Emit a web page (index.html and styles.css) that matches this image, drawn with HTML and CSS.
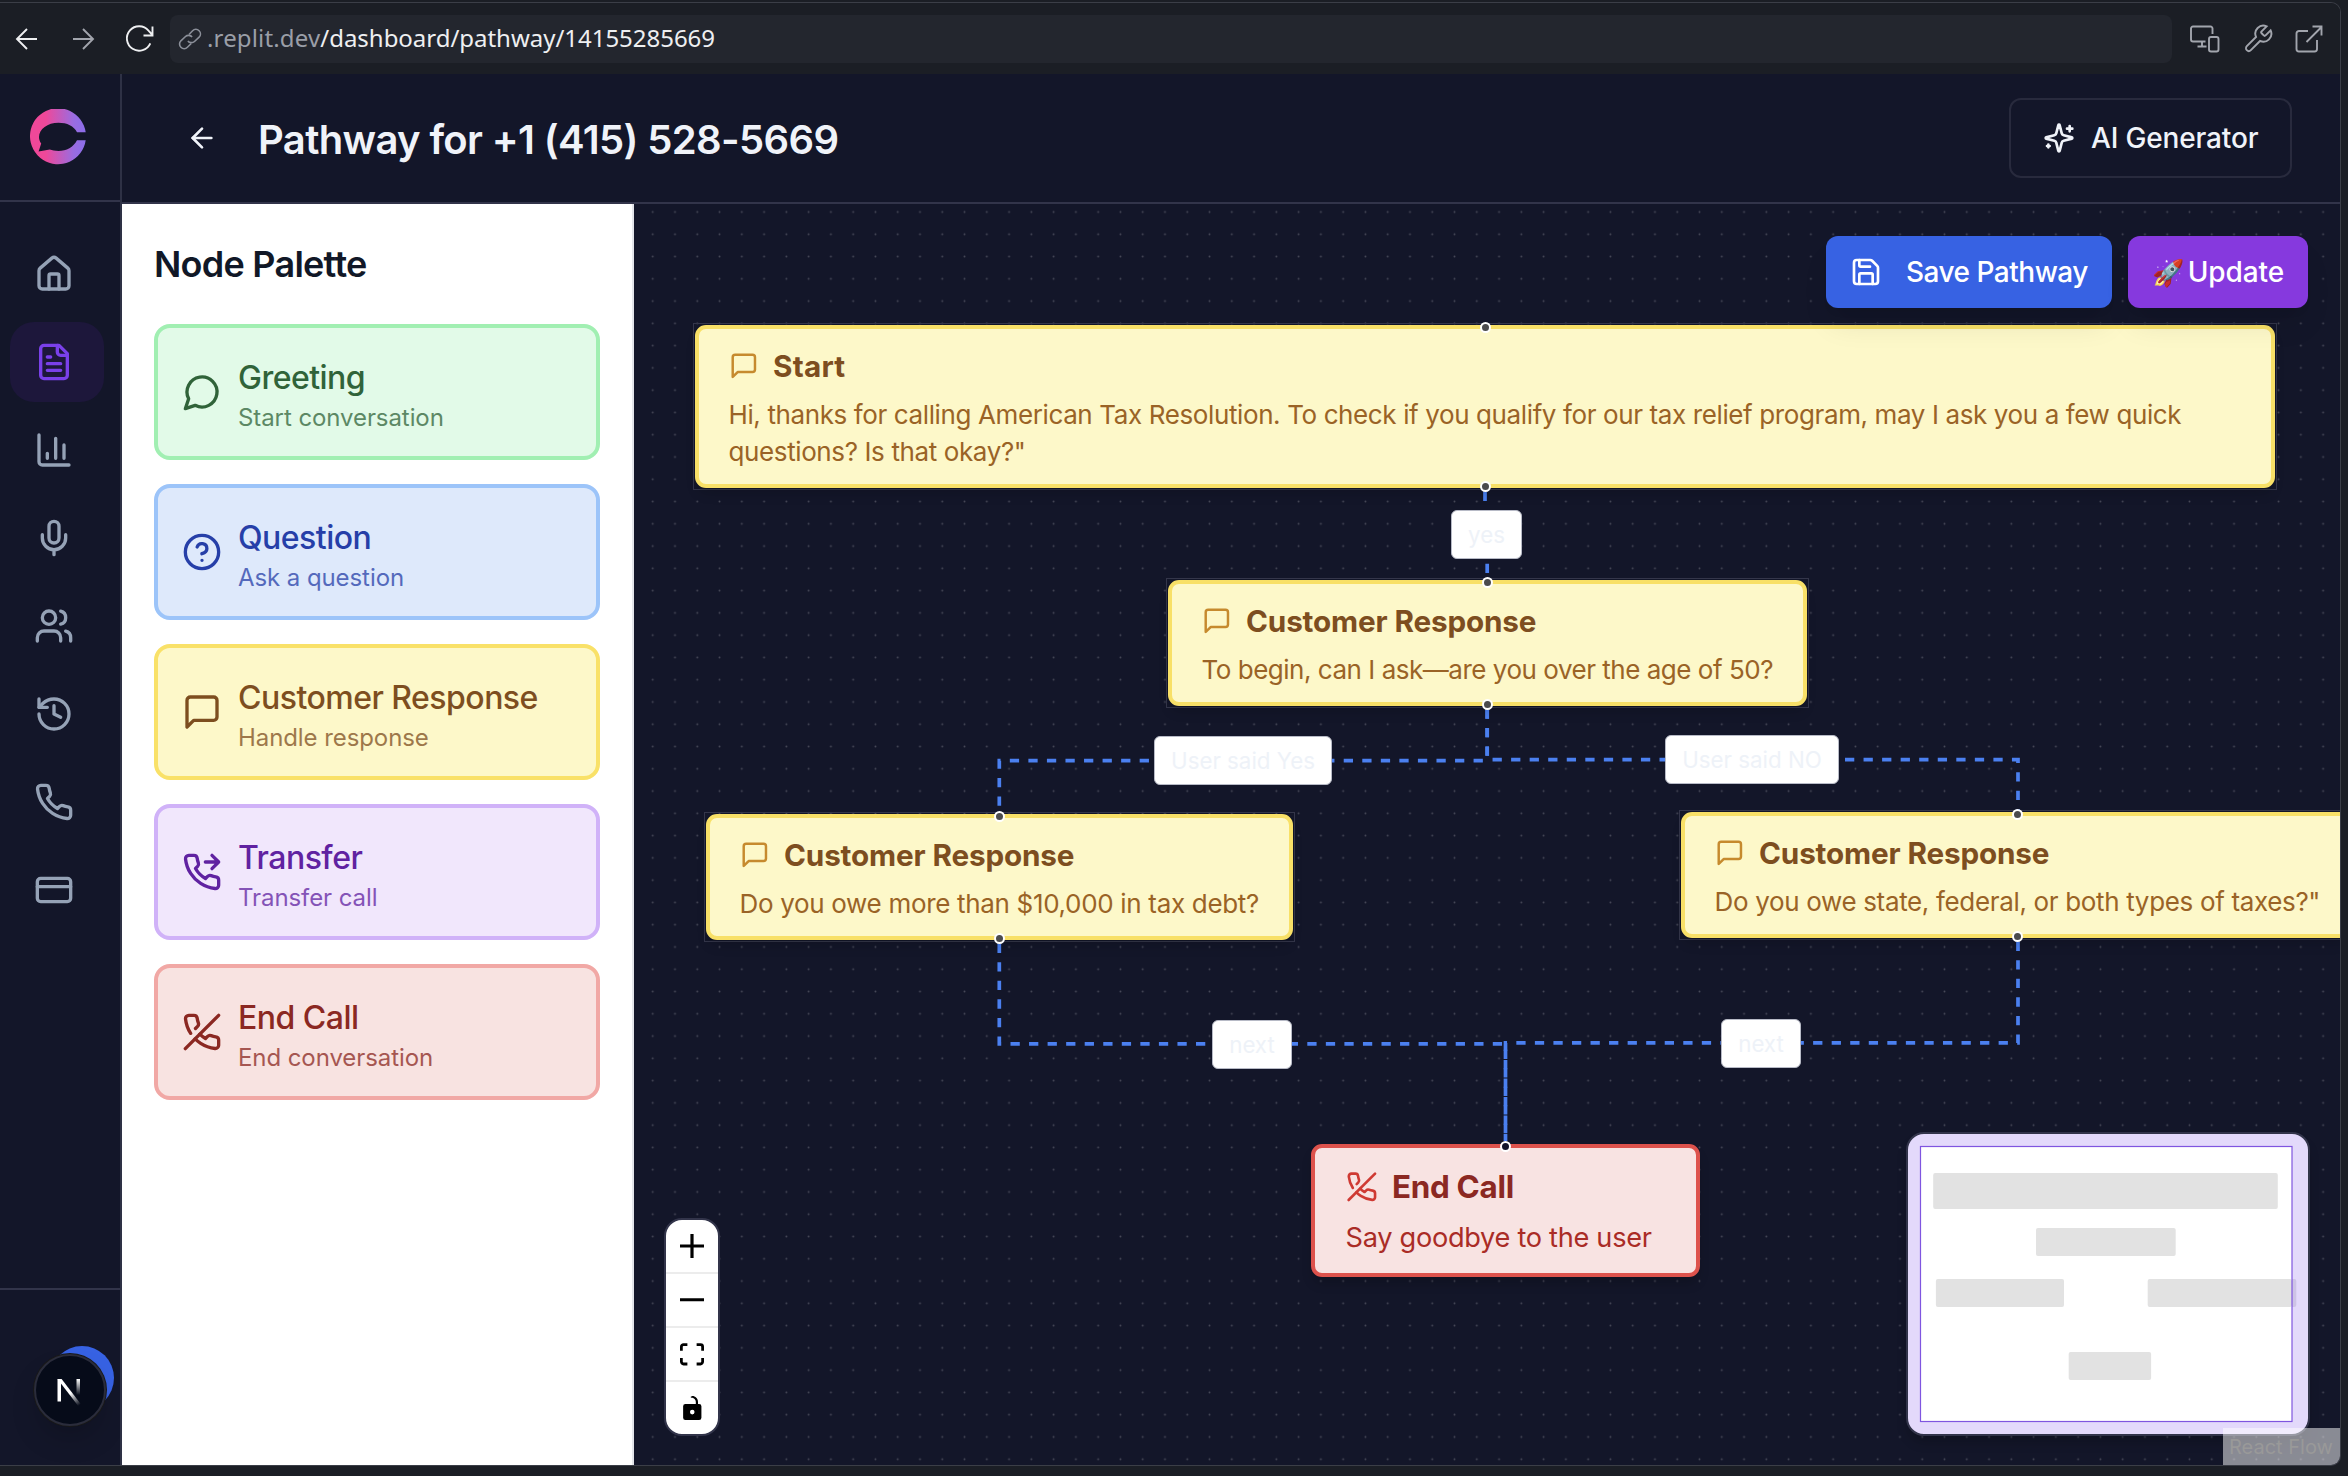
FILE: index.html
```html
<!DOCTYPE html>
<html lang="en">
<head>
<meta charset="utf-8">
<title>Pathway for +1 (415) 528-5669</title>
<link rel="stylesheet" href="styles.css">
</head>
<body>
<svg class="defs" width="0" height="0" aria-hidden="true">
  <symbol id="i-message" viewBox="0 0 24 24"><path d="M21 15a2 2 0 0 1-2 2H7l-4 4V5a2 2 0 0 1 2-2h14a2 2 0 0 1 2 2z"/></symbol>
  <symbol id="i-phone-off" viewBox="0 0 24 24"><path d="M10.68 13.31a16 16 0 0 0 3.41 2.6l1.27-1.27a2 2 0 0 1 2.11-.45 12.84 12.84 0 0 0 2.81.7 2 2 0 0 1 1.72 2v3a2 2 0 0 1-2.18 2 19.79 19.79 0 0 1-8.63-3.07 19.42 19.42 0 0 1-3.33-2.67m-2.67-3.34a19.79 19.79 0 0 1-3.07-8.63A2 2 0 0 1 4.11 2h3a2 2 0 0 1 2 1.72 12.84 12.84 0 0 0 .7 2.81 2 2 0 0 1-.45 2.11L8.09 9.91"/><path d="M22 2 2 22"/></symbol>
  <symbol id="i-arrow-left" viewBox="0 0 24 24"><path d="m12 19-7-7 7-7"/><path d="M19 12H5"/></symbol>
</svg>
<div class="preview">
  <div class="browser-bar">
    <div class="nav-buttons">
      <svg class="bar-icon" width="24" height="24" viewBox="0 0 24 24"><path d="M12 2 2 12l10 10M2.300 12H22"/></svg>
      <svg class="bar-icon muted" width="24" height="24" viewBox="0 0 24 24"><path d="m12 2 10 10-10 10M21.700 12H2"/></svg>
      <svg class="bar-icon" width="32" height="32" viewBox="0 0 32 32"><path d="M27.300 20.300A12.200 12.200 0 1 1 25.500 7.700L29.500 12M29.500 3.500V12.500H20.500"/></svg>
    </div>
    <div class="url-field">
      <svg class="link-icon" width="24" height="24" viewBox="0 0 24 24"><path d="m11 7.500 3.600-3.800a4.500 4.500 0 0 1 6.500 6.500l-4.600 4.300a4.500 4.500 0 0 1-6.600-.6"/><path d="m13.200 16.500-3.800 3.800a4.500 4.500 0 0 1-6.500-6.500l4.600-4.300a4.500 4.500 0 0 1 6.600.6"/></svg>
      <span class="url-host">.replit.dev</span><span class="url-path">/dashboard/pathway/14155285669</span>
    </div>
    <div class="bar-tools">
      <svg width="30" height="28" viewBox="0 0 30 28"><path d="M22.500 9V3.500A2 2 0 0 0 20.500 1.500H3A2 2 0 0 0 1 3.500V14.500A2 2 0 0 0 3 16.500H15.500M12 16.500V21M7.500 21.500H16.500"/><rect x="19" y="12" width="9.500" height="14.500" rx="2"/></svg>
      <svg width="32" height="32" viewBox="0 0 24 24" class="thin"><path d="M14.700 6.300a1 1 0 0 0 0 1.400l1.600 1.600a1 1 0 0 0 1.400 0l3.770-3.770a6 6 0 0 1-7.940 7.940l-6.910 6.910a2.120 2.120 0 0 1-3-3l6.910-6.910a6 6 0 0 1 7.940-7.940l-3.760 3.760z"/></svg>
      <svg width="28" height="28" viewBox="0 0 28 28"><path d="M13 6H4A2.500 2.500 0 0 0 1.500 8.500V24A2.500 2.500 0 0 0 4 26.500H19.500A2.500 2.500 0 0 0 22 24V15M11.500 17 26.500 2M17.500 1.500H26.500V10.500"/></svg>
    </div>
  </div>

  <div class="app">
    <aside class="sidebar">
      <div class="brand">
        <svg width="56" height="56" viewBox="0 0 56 56">
          <defs><linearGradient id="brand-fill" x1="0" x2="1" y1="0" y2="0"><stop offset=".28" stop-color="#ef4899"/><stop offset=".78" stop-color="#9a6ce0"/><stop offset="1" stop-color="#8b6eea"/></linearGradient></defs>
          <path fill="url(#brand-fill)" d="M55.700 23.200A28 28 0 1 0 55.700 31.200H47C43.500 38 36.500 42 28.500 42C25 42 22 41.300 19.800 40.600L8.600 42.600L11.200 34.600C9.700 32.500 9 30.200 9 28C9 20 17.500 13.700 28.500 13.700C37 13.700 44 17 47 23.200Z"/>
        </svg>
      </div>
      <nav class="side-nav">
        <a class="side-item"><svg class="icon" viewBox="0 0 24 24"><path d="M15 21v-8a1 1 0 0 0-1-1h-4a1 1 0 0 0-1 1v8"/><path d="M3 10a2 2 0 0 1 .709-1.528l7-5.999a2 2 0 0 1 2.582 0l7 5.999A2 2 0 0 1 21 10v9a2 2 0 0 1-2 2H5a2 2 0 0 1-2-2z"/></svg></a>
        <a class="side-item active"><svg class="icon" viewBox="0 0 24 24"><path d="M15 2H6a2 2 0 0 0-2 2v16a2 2 0 0 0 2 2h12a2 2 0 0 0 2-2V7Z"/><path d="M14 2v4a2 2 0 0 0 2 2h4M10 9H8M16 13H8M16 17H8"/></svg></a>
        <a class="side-item"><svg class="icon" viewBox="0 0 24 24"><path d="M3 3v16a2 2 0 0 0 2 2h16M18 17V9M13 17V5M8 17v-3"/></svg></a>
        <a class="side-item"><svg class="icon" viewBox="0 0 24 24"><path d="M12 2a3 3 0 0 0-3 3v7a3 3 0 0 0 6 0V5a3 3 0 0 0-3-3Z"/><path d="M19 10v2a7 7 0 0 1-14 0v-2M12 19v3"/></svg></a>
        <a class="side-item"><svg class="icon" viewBox="0 0 24 24"><path d="M16 21v-2a4 4 0 0 0-4-4H6a4 4 0 0 0-4 4v2"/><circle cx="9" cy="7" r="4"/><path d="M22 21v-2a4 4 0 0 0-3-3.870M16 3.130a4 4 0 0 1 0 7.750"/></svg></a>
        <a class="side-item"><svg class="icon" viewBox="0 0 24 24"><path d="M3 12a9 9 0 1 0 9-9 9.750 9.750 0 0 0-6.740 2.740L3 8"/><path d="M3 3v5h5M12 7v5l4 2"/></svg></a>
        <a class="side-item"><svg class="icon" viewBox="0 0 24 24"><path d="M22 16.920v3a2 2 0 0 1-2.180 2 19.790 19.790 0 0 1-8.630-3.070 19.500 19.500 0 0 1-6-6 19.790 19.790 0 0 1-3.070-8.670A2 2 0 0 1 4.110 2h3a2 2 0 0 1 2 1.720 12.840 12.840 0 0 0 .7 2.810 2 2 0 0 1-.45 2.110L8.090 9.910a16 16 0 0 0 6 6l1.270-1.270a2 2 0 0 1 2.110-.45 12.840 12.840 0 0 0 2.810.7A2 2 0 0 1 22 16.920z"/></svg></a>
        <a class="side-item"><svg class="icon" viewBox="0 0 24 24"><rect x="2" y="5" width="20" height="14" rx="2"/><path d="M2 10h20"/></svg></a>
      </nav>
      <div class="account">
        <span class="avatar"></span>
        <span class="dev-badge">
          <svg width="32" height="32" viewBox="0 0 32 32">
            <defs>
              <linearGradient id="n-diag" gradientUnits="userSpaceOnUse" x1="18" y1="18" x2="27" y2="30"><stop stop-color="#fff"/><stop offset="1" stop-color="#fff" stop-opacity="0"/></linearGradient>
              <linearGradient id="n-stem" gradientUnits="userSpaceOnUse" x1="24" y1="5" x2="24" y2="21"><stop stop-color="#fff"/><stop offset="1" stop-color="#fff" stop-opacity="0"/></linearGradient>
            </defs>
            <path fill="#fff" d="M3.500 5H7V27.500H3.500Z"/>
            <path fill="url(#n-diag)" d="M3.500 5H7.600L27.500 31L25 33Z"/>
            <path fill="url(#n-stem)" d="M22.500 5H26V21H22.500Z"/>
          </svg>
        </span>
      </div>
    </aside>

    <main class="main">
      <header class="page-header">
        <button class="back"><svg class="icon small"><use href="#i-arrow-left"/></svg></button>
        <h1 class="page-title">Pathway for +1 (415) 528-5669</h1>
        <button class="ai-button">
          <svg class="icon small" viewBox="0 0 24 24"><path d="M9.937 15.500A2 2 0 0 0 8.500 14.063l-6.135-1.582a.5.5 0 0 1 0-.962L8.500 9.936A2 2 0 0 0 9.937 8.500l1.582-6.135a.5.5 0 0 1 .963 0L14.063 8.500A2 2 0 0 0 15.500 9.937l6.135 1.581a.5.5 0 0 1 0 .964L15.500 14.063a2 2 0 0 0-1.437 1.437l-1.582 6.135a.5.5 0 0 1-.963 0z"/><path d="M20 3v4M22 5h-4M4 17v2M5 18H3"/></svg>
          AI Generator
        </button>
      </header>

      <div class="workspace">
        <section class="palette">
          <h2 class="palette-title">Node Palette</h2>
          <div class="palette-card green">
            <svg class="icon" viewBox="0 0 24 24"><path d="M7.900 20A9 9 0 1 0 4 16.100L2 22Z"/></svg>
            <div class="card-text"><div class="card-name">Greeting</div><div class="card-hint">Start conversation</div></div>
          </div>
          <div class="palette-card blue">
            <svg class="icon" viewBox="0 0 24 24"><circle cx="12" cy="12" r="10"/><path d="M9.090 9a3 3 0 0 1 5.830 1c0 2-3 3-3 3M12 17h.01"/></svg>
            <div class="card-text"><div class="card-name">Question</div><div class="card-hint">Ask a question</div></div>
          </div>
          <div class="palette-card yellow">
            <svg class="icon"><use href="#i-message"/></svg>
            <div class="card-text"><div class="card-name">Customer Response</div><div class="card-hint">Handle response</div></div>
          </div>
          <div class="palette-card purple">
            <svg class="icon" viewBox="0 0 24 24"><path d="m18 2 4 4-4 4M14 6h8"/><path d="M22 16.920v3a2 2 0 0 1-2.180 2 19.790 19.790 0 0 1-8.630-3.070 19.500 19.500 0 0 1-6-6 19.790 19.790 0 0 1-3.070-8.670A2 2 0 0 1 4.110 2h3a2 2 0 0 1 2 1.720 12.840 12.840 0 0 0 .7 2.810 2 2 0 0 1-.45 2.110L8.090 9.910a16 16 0 0 0 6 6l1.270-1.270a2 2 0 0 1 2.110-.45 12.840 12.840 0 0 0 2.810.7A2 2 0 0 1 22 16.920z"/></svg>
            <div class="card-text"><div class="card-name">Transfer</div><div class="card-hint">Transfer call</div></div>
          </div>
          <div class="palette-card red">
            <svg class="icon"><use href="#i-phone-off"/></svg>
            <div class="card-text"><div class="card-name">End Call</div><div class="card-hint">End conversation</div></div>
          </div>
        </section>

        <section class="canvas">
          <svg class="edges" width="1706" height="1261" viewBox="634 204 1706 1261">
            <defs><pattern id="dots" patternUnits="userSpaceOnUse" x="641.600" y="200.860" width="22.272" height="22.272"><circle cx="11.136" cy="11.136" r=".93" fill="#91919a" fill-opacity=".42"/></pattern></defs>
            <rect x="634" y="204" width="1706" height="1261" fill="url(#dots)"/>
            <g class="edge">
              <path d="M1485 491.700V534H1487.200V578"/>
              <path d="M1487.200 709.400V760.700H999.300V812"/>
              <path d="M1487.200 709.400V759.700H2018V810"/>
              <path d="M999.300 943.700V1043.800H1505.500V1141"/>
              <path d="M2018 941.700V1042.900H1505.500V1141"/>
            </g>
          </svg>

          <span class="edge-label l-yes">yes</span>
          <span class="edge-label l-said-yes">User said Yes</span>
          <span class="edge-label l-said-no">User said NO</span>
          <span class="edge-label l-next-a">next</span>
          <span class="edge-label l-next-b">next</span>

          <div class="node n-start"><div class="node-body">
            <div class="node-title"><svg class="icon"><use href="#i-message"/></svg>Start</div>
            <p class="node-text">Hi, thanks for calling American Tax Resolution. To check if you qualify for our tax relief program, may I ask you a few quick<br>questions? Is that okay?"</p>
            <i class="handle in"></i><i class="handle out"></i>
          </div></div>
          <div class="node n-age"><div class="node-body">
            <div class="node-title"><svg class="icon"><use href="#i-message"/></svg>Customer Response</div>
            <p class="node-text">To begin, can I ask—are you over the age of 50?</p>
            <i class="handle in"></i><i class="handle out"></i>
          </div></div>
          <div class="node n-debt"><div class="node-body">
            <div class="node-title"><svg class="icon"><use href="#i-message"/></svg>Customer Response</div>
            <p class="node-text">Do you owe more than $10,000 in tax debt?</p>
            <i class="handle in"></i><i class="handle out"></i>
          </div></div>
          <div class="node n-taxes"><div class="node-body">
            <div class="node-title"><svg class="icon"><use href="#i-message"/></svg>Customer Response</div>
            <p class="node-text">Do you owe state, federal, or both types of taxes?"</p>
            <i class="handle in"></i><i class="handle out"></i>
          </div></div>
          <div class="node-end">
            <div class="node-title"><svg class="icon"><use href="#i-phone-off"/></svg>End Call</div>
            <p class="node-text">Say goodbye to the user</p>
            <i class="handle in"></i>
          </div>

          <div class="toolbar">
            <button class="tool save"><svg class="icon small" viewBox="0 0 24 24"><path d="M15.200 3a2 2 0 0 1 1.400.6l3.800 3.800a2 2 0 0 1 .6 1.400V19a2 2 0 0 1-2 2H5a2 2 0 0 1-2-2V5a2 2 0 0 1 2-2z"/><path d="M17 21v-7a1 1 0 0 0-1-1H8a1 1 0 0 0-1 1v7M7 3v4a1 1 0 0 0 1 1h7"/></svg>Save Pathway</button>
            <button class="tool update"><span class="rocket">🚀</span>Update</button>
          </div>

          <div class="controls">
            <button><svg width="24" height="24" viewBox="0 0 32 32"><path d="M32 18.133H18.133V32h-4.266V18.133H0v-4.266h13.867V0h4.266v13.867H32z"/></svg></button>
            <button><svg width="24" height="4" viewBox="0 0 32 5"><path d="M0 0h32v4.200H0z"/></svg></button>
            <button><svg width="24" height="23" viewBox="0 0 32 30"><path d="M3.692 4.630c0-.53.4-.938.939-.938h5.215V0H4.708C2.130 0 0 2.054 0 4.630v5.216h3.692V4.631zM27.354 0h-5.200v3.692h5.170c.53 0 .984.4.984.939v5.215H32V4.631A4.624 4.624 0 0027.354 0zm.954 24.830c0 .532-.4.940-.939.940h-5.215v3.768h5.215c2.577 0 4.631-2.130 4.631-4.707v-5.139h-3.692v5.139zm-23.677.940c-.531 0-.939-.4-.939-.940v-5.138H0v5.139c0 2.577 2.130 4.707 4.708 4.707h5.138V25.770H4.631z"/></svg></button>
            <button><svg width="19" height="24" viewBox="0 0 25 32"><path d="M21.333 10.667H19.810V7.619C19.810 3.429 16.380 0 12.190 0c-4.114 1.828-1.370 2.133.305 2.438 1.676.305 4.420 2.590 4.420 5.181v3.048H3.047A3.056 3.056 0 000 13.714v15.238A3.056 3.056 0 003.048 32h18.285a3.056 3.056 0 003.048-3.048V13.714a3.056 3.056 0 00-3.048-3.047zM12.190 24.533a3.056 3.056 0 01-3.047-3.047 3.056 3.056 0 013.047-3.048 3.056 3.056 0 013.048 3.048 3.056 3.056 0 01-3.048 3.047z"/></svg></button>
          </div>

          <div class="minimap">
            <svg width="400" height="300" viewBox="1908 1134 400 300">
              <rect x="1920.500" y="1146.500" width="371.500" height="275" fill="#fff"/>
              <g fill="#e2e2e2">
                <rect x="1933.200" y="1173" width="344.600" height="36" rx="2"/>
                <rect x="2036" y="1228" width="139.700" height="28" rx="2"/>
                <rect x="1935.900" y="1279" width="128.100" height="28" rx="2"/>
                <rect x="2147.700" y="1279" width="144.300" height="28" rx="2"/>
                <rect x="2068.700" y="1352" width="82.400" height="28" rx="2"/>
              </g>
              <path d="M2292 1279h2.300a2 2 0 0 1 2 2v24a2 2 0 0 1-2 2h-2.300z" fill="#cdc3e6"/>
              <rect x="1920.500" y="1146.500" width="371.500" height="275" fill="none" stroke="#7f55e0" stroke-width="1.200"/>
            </svg>
          </div>
          <a class="attribution">React Flow</a>
        </section>
      </div>
    </main>
  </div>
</div>
</body>
</html>
```
FILE: styles.css
```css
* { box-sizing: border-box; }
body {
  margin: 0;
  width: 2348px;
  height: 1476px;
  overflow: hidden;
  background: #1b1e25;
  font-family: Inter, "Liberation Sans", sans-serif;
  color: #f0f3f9;
}
h1, h2, p { margin: 0; }
button { border: 0; margin: 0; padding: 0; background: none; font: inherit; color: inherit; }
svg { display: block; flex: none; }
.defs { position: absolute; }

.icon {
  width: 40px;
  height: 40px;
  flex: none;
  fill: none;
  stroke: currentColor;
  stroke-width: 2;
  stroke-linecap: round;
  stroke-linejoin: round;
}
.icon.small { width: 32px; height: 32px; }

/* Browser preview frame */
.preview {
  display: flex;
  flex-direction: column;
  width: 2341px;
  height: 1464px;
  margin-top: 2px;
  border: 1px solid #3b3e47;
  border-left: 0;
  border-radius: 0 10px 10px 0;
  overflow: hidden;
}
.browser-bar {
  display: flex;
  align-items: center;
  height: 71px;
  padding: 0 17px 0 15px;
  background: #1b1e25;
}
.nav-buttons { display: flex; align-items: center; gap: 32px; width: 155px; }
.nav-buttons svg:last-child { margin-left: -4px; }
.bar-icon, .link-icon, .bar-tools svg { fill: none; stroke: #eeeff1; stroke-width: 1.9; }
.bar-icon.muted, .bar-tools svg { stroke: #a2a5ad; }
.link-icon { stroke: #8b8f99; stroke-width: 1.6; margin-right: 5px; }
.bar-tools .thin { stroke-width: 1.45; }
.url-field {
  display: flex;
  align-items: center;
  flex: 1;
  height: 48px;
  padding: 0 8px;
  border-radius: 8px;
  background: #23262e;
  font: 24px/46px "Noto Sans", sans-serif;
}
.url-host, .url-path { height: 48px; }
.url-host { color: #9a9ea7; letter-spacing: .15px; }
.url-path { color: #eeeff1; letter-spacing: -.03px; }
.bar-tools { display: flex; align-items: center; gap: 21.500px; padding-left: 18px; }

/* App shell */
.app { display: flex; flex: 1; min-height: 0; background: #131629; }
.sidebar {
  display: flex;
  flex-direction: column;
  width: 122px;
  border-right: 2px solid #2e3145;
}
.brand { height: 128px; padding: 35px 0 0 30px; border-bottom: 2px solid #32344a; }
.side-nav { display: flex; flex-direction: column; gap: 8px; flex: 1; padding: 32px 16px 0 10px; }
.side-item {
  display: flex;
  align-items: center;
  height: 80px;
  padding-left: 24px;
  border-radius: 24px;
  color: #95a2b6;
}
.side-item.active { background: #1d173b; color: #7a40ea; }
.account { position: relative; height: 177px; border-top: 2px solid #32344a; }
.avatar { position: absolute; left: 50px; top: 56px; width: 64px; height: 64px; border-radius: 50%; background: #3762e3; }
.dev-badge {
  position: absolute;
  left: 34px;
  top: 64px;
  display: grid;
  place-items: center;
  width: 72px;
  height: 72px;
  border: 2px solid #2a2c3b;
  border-radius: 50%;
  background: #060b19;
  box-shadow: 0 0 0 1px #191919, 0 16px 32px -8px rgba(0, 0, 0, .24);
}

.main { display: flex; flex-direction: column; flex: 1; min-width: 0; }
.page-header {
  display: flex;
  align-items: center;
  height: 130px;
  padding: 0 48px;
  border-bottom: 2px solid #32344a;
}
.back { display: grid; place-items: center; width: 64px; height: 64px; margin-right: 24px; }
.page-title { flex: 1; padding-top: 3px; font-size: 40px; line-height: 56px; font-weight: 600; letter-spacing: -.64px; }
.ai-button {
  display: flex;
  align-items: center;
  gap: 16px;
  width: 283px;
  height: 80px;
  padding: 0 32px;
  border: 2px solid #282a3d;
  border-radius: 12px;
  font-size: 28px;
  font-weight: 500;
  white-space: nowrap;
  letter-spacing: -.15px;
}

.workspace { display: flex; flex: 1; min-height: 0; }

/* Palette */
.palette {
  display: flex;
  flex-direction: column;
  gap: 24px;
  width: 512px;
  padding: 32px;
  background: #fff;
  border-right: 2px solid #e3e5ea;
}
.palette-title { margin-bottom: 8px; font-size: 36px; line-height: 56px; font-weight: 600; letter-spacing: -.75px; color: #111827; }
.palette-card {
  display: flex;
  align-items: center;
  gap: 16px;
  height: 136px;
  padding: 0 24px;
  border: 4px solid;
  border-radius: 16px;
}
.card-text { padding-top: 3px; }
.card-name { font-size: 32px; line-height: 48px; font-weight: 500; letter-spacing: -.52px; }
.card-hint { font-size: 24px; line-height: 32px; letter-spacing: -.08px; opacity: .75; }
.green { background: #e2fae8; border-color: #a1efb2; color: #306339; }
.blue { background: #dee9fb; border-color: #9cc4f9; color: #263fa8; }
.yellow { background: #fdf8c9; border-color: #f9e168; color: #7d4e1f; }
.purple { background: #f1e7fc; border-color: #d0b2f8; color: #6022a1; }
.red { background: #f8e3e1; border-color: #f1a8a5; color: #8b2822; }

/* Flow canvas */
.canvas { position: relative; flex: 1; overflow: hidden; }
.edges { position: absolute; left: 0; top: 0; }
.edge path { fill: none; stroke: #4b80f0; stroke-width: 3.7; stroke-dasharray: 9.275; }

.edge-label {
  position: absolute;
  display: grid;
  place-items: center;
  height: 49px;
  border: 1px solid #b7bac6;
  border-radius: 6px;
  background: #fff;
  color: #eef2f8;
  font-size: 22.3px;
  white-space: nowrap;
}
.l-yes { left: 817px; top: 306px; width: 71px; }
.l-said-yes { left: 520px; top: 532px; width: 178px; }
.l-said-no { left: 1031px; top: 531px; width: 174px; }
.l-next-a { left: 578px; top: 816px; width: 80px; }
.l-next-b { left: 1087px; top: 815px; width: 80px; }

.node { position: absolute; padding: 1px; border: 1px solid #34364a; }
.n-start { left: 59px; top: 119px; width: 1584px; height: 167px; }
.n-age { left: 532px; top: 374px; width: 643px; height: 130px; }
.n-debt { left: 70px; top: 608px; width: 591px; height: 130px; }
.n-taxes { left: 1045px; top: 606px; width: 677px; height: 130px; }
.node-body {
  position: relative;
  height: 100%;
  padding: 15px 0 0 29.500px;
  border: 4px solid #f8e067;
  border-radius: 11px;
  background: #fdf8c9;
  box-shadow: 0 8px 12px -2px rgba(0, 0, 0, .14);
}
.node-title {
  display: flex;
  align-items: center;
  gap: 14.800px;
  height: 44.500px;
  margin-bottom: 7.500px;
  color: #7d4e1f;
  font-size: 29.700px;
  font-weight: 700;
  letter-spacing: -.15px;
  white-space: nowrap;
}
.n-start .node-title { letter-spacing: .25px; }
.node-title .icon { width: 29.700px; height: 29.700px; color: #c68a2e; }
.node-text { color: #9a6326; font-size: 26px; line-height: 37.100px; letter-spacing: -.385px; white-space: nowrap; }
.n-age .node-text { letter-spacing: -.48px; }
.n-debt .node-text { letter-spacing: -.32px; }
.n-taxes .node-text { letter-spacing: -.34px; }

.handle {
  position: absolute;
  left: 50%;
  width: 11px;
  height: 11px;
  margin-left: -5.500px;
  border: 2px solid #fff;
  border-radius: 50%;
  background: #4b4b4d;
}
.handle.in { top: -7.500px; }
.handle.out { bottom: -7.500px; }

.node-end {
  position: absolute;
  left: 677px;
  top: 940px;
  width: 389px;
  height: 133px;
  padding: 16.500px 0 0 30.500px;
  border: 4px solid #dd524c;
  border-radius: 11px;
  background: #f8e3e2;
  box-shadow: 0 8px 12px -2px rgba(0, 0, 0, .2);
}
.node-end .node-title { margin-bottom: 9.500px; color: #8b2822; font-size: 31.400px; letter-spacing: -.3px; }
.node-end .node-title .icon { width: 31.700px; height: 31.700px; color: #cf3a33; }
.node-end .node-text { color: #aa2c26; font-size: 27.200px; letter-spacing: -.3px; }
.node-end .handle { background: #12142a; }

.toolbar { position: absolute; top: 32px; right: 32px; display: flex; gap: 16px; }
.tool {
  display: flex;
  align-items: center;
  height: 72px;
  padding: 0 24px;
  border-radius: 12px;
  color: #fff;
  font-size: 28px;
  font-weight: 500;
  white-space: nowrap;
  box-shadow: 0 20px 30px -6px rgba(0, 0, 0, .1), 0 8px 12px -8px rgba(0, 0, 0, .1);
}
.save { width: 286px; gap: 24px; background: #3762e3; letter-spacing: -.5px; }
.update { width: 180px; background: #8639de; letter-spacing: -.1px; }
.rocket { width: 40px; margin-left: -4px; font-size: 26px; letter-spacing: 0; }

.controls {
  position: absolute;
  left: 30px;
  top: 1014px;
  display: flex;
  flex-direction: column;
  width: 56px;
  border: 2px solid #32344a;
  border-radius: 18px;
  overflow: hidden;
  background: #fff;
}
.controls button { display: grid; place-items: center; height: 54px; border-bottom: 2px solid #ececec; }
.controls button:last-child { height: 52px; border-bottom: 0; }

.minimap {
  position: absolute;
  left: 1272px;
  top: 928px;
  width: 404px;
  height: 304px;
  border: 2px solid #32344a;
  border-radius: 18px;
  overflow: hidden;
  background: #e3d9fb;
  box-shadow: 0 8px 12px -2px rgba(0, 0, 0, .2);
}
.attribution {
  position: absolute;
  right: 0;
  bottom: 0;
  width: 117px;
  height: 37px;
  padding: 1px 0 0 6px;
  background: rgba(255, 255, 255, .5);
  color: #999;
  font-size: 20px;
  line-height: 37px;
  white-space: nowrap;
}
```
